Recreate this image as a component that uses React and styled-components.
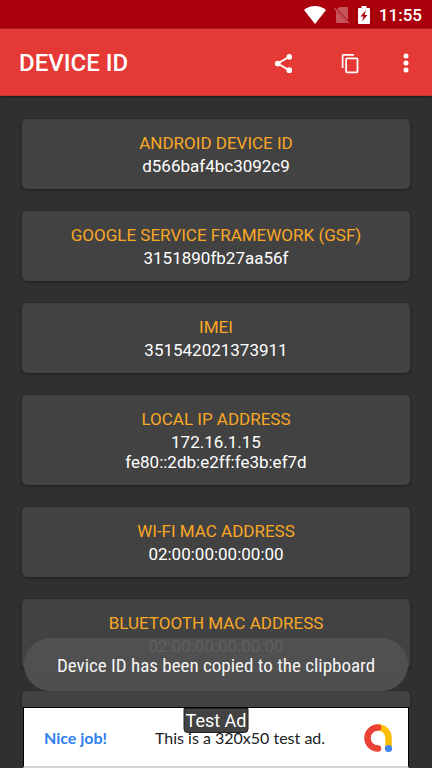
import React from "react";
import styled, { createGlobalStyle } from "styled-components";

const GlobalStyle = createGlobalStyle`
  *, *::before, *::after { box-sizing: border-box; }
  body {
    margin: 0;
    background: #303030;
    font-family: Roboto, "Liberation Sans", sans-serif;
  }
`;

const Screen = styled.div`
  position: relative;
  display: flex;
  flex-direction: column;
  height: 100vh;
  overflow: hidden;
  background: #303030;
  color: #fff;
`;

const StatusBar = styled.div`
  flex: none;
  display: flex;
  align-items: center;
  justify-content: flex-end;
  height: 29px;
  padding: 1px 10px 0 0;
  background: #a9000c;
  border-bottom: 1px solid #b71a1f;
  svg { display: block; }
`;

const StatusIcons = styled.div`
  display: flex;
  align-items: center;
  gap: 8px;
  margin-right: 9px;
`;

const Clock = styled.time`
  font-size: 17px;
  line-height: 28px;
  font-weight: 500;
`;

const AppBar = styled.header`
  position: relative;
  flex: none;
  display: flex;
  align-items: center;
  height: 67px;
  padding: 2px 4px 0 19px;
  background: #e53935;
  border-bottom: 1px solid #c5322f;
  box-shadow: 0 1px 2px #101c1c;
`;

const Title = styled.h1`
  flex: 1;
  margin: 0;
  font-size: 24px;
  line-height: 32px;
  font-weight: 500;
`;

const IconButton = styled.button`
  display: flex;
  align-items: center;
  justify-content: center;
  width: ${(p) => (p.$narrow ? "44px" : "67px")};
  height: 48px;
  padding: 0;
  border: 0;
  background: none;
  color: #fff;
  cursor: pointer;
  svg { display: block; }
`;

const List = styled.main`
  flex: 1;
  min-height: 0;
  overflow: hidden;
  display: flex;
  flex-direction: column;
  gap: 22px;
  padding: 23px 22px 0;
`;

const Card = styled.section`
  flex: none;
  padding: 14px 12px 13px;
  border-radius: 5px;
  background: #424242;
  box-shadow: 0 1px 3px rgba(0, 0, 0, 0.4);
  text-align: center;
`;

const CardTitle = styled.h2`
  margin: 0 0 3px;
  color: #f9a825;
  font-size: 17px;
  line-height: 20px;
  font-weight: 400;
`;

const CardValue = styled.p`
  margin: 0;
  font-size: 17px;
  line-height: 20px;
`;

const Toast = styled.div`
  position: absolute;
  left: 24px;
  right: 24px;
  bottom: 77px;
  padding: 16px 8px 13px;
  border-radius: 27px;
  background: rgba(82, 82, 82, 0.93);
  color: #f5f5f5;
  font-family: "Roboto Condensed", Roboto, sans-serif;
  font-size: 19px;
  line-height: 24px;
  text-align: center;
  white-space: nowrap;
`;

const Ad = styled.aside`
  position: relative;
  flex: none;
  display: flex;
  align-items: center;
  height: 61px;
  margin: 0 23px;
  padding: 2px 15px 0 20px;
  border: 1px solid #000;
  border-bottom: 2px solid #cfd4d8;
  background: #fff;
  font-family: Lato, "Open Sans", sans-serif;
  font-size: 16px;
  line-height: 24px;
`;

const AdLink = styled.a`
  width: 111px;
  color: #3080f0;
  font-weight: 700;
  text-decoration: none;
`;

const AdText = styled.span`
  flex: 1;
  color: #202124;
  white-space: nowrap;
`;

const AdBadge = styled.span`
  position: absolute;
  top: 0;
  left: 50%;
  transform: translateX(-50%);
  padding: 1px 1px 0;
  border: 1px solid #222;
  border-radius: 0 0 4px 4px;
  background: #424242;
  color: #fff;
  font-family: Roboto, sans-serif;
  font-size: 18px;
  line-height: 22px;
  white-space: nowrap;
`;

const WifiIcon = () => (
  <svg width="22" height="18" viewBox="0 0 22 18" fill="#fff" aria-hidden="true">
    <path d="M11 18 0 4C3 1.500 7 0 11 0s8 1.500 11 4Z" />
  </svg>
);

const NoSimIcon = () => (
  <svg width="16" height="18" viewBox="0 0 16 18" aria-hidden="true">
    <path d="M6 1h7q1 0 1 1v12L3 3ZM2 5l12 12H3q-1 0-1-1Z" fill="#c6555b" />
    <path d="m0 2 15 15" stroke="#c6555b" strokeWidth="1.300" />
  </svg>
);

const BatteryIcon = () => (
  <svg width="12" height="18" viewBox="0 0 12 18" aria-hidden="true">
    <path d="M3.500 0h5v2H11q1 0 1 1v14q0 1-1 1H1q-1 0-1-1V3q0-1 1-1h2.500Z" fill="#fff" />
    <path d="M8 4 2.500 10.500h3L4 15.500l5.500-6.500h-3Z" fill="#a9000c" />
  </svg>
);

const ShareIcon = () => (
  <svg width="23" height="23" viewBox="0 0 24 24" fill="#fff" aria-hidden="true">
    <path d="M18 5 6 12l12 7" fill="none" stroke="#fff" strokeWidth="2" />
    <circle cx="18" cy="5" r="3" />
    <circle cx="6" cy="12" r="3" />
    <circle cx="18" cy="19" r="3" />
  </svg>
);

const CopyIcon = () => (
  <svg width="21" height="21" viewBox="0 0 24 24" fill="#fff" aria-hidden="true">
    <path d="M16 1H4c-1.100 0-2 .9-2 2v14h2V3h12V1zm3 4H8c-1.100 0-2 .9-2 2v14c0 1.100.9 2 2 2h11c1.100 0 2-.9 2-2V7c0-1.100-.9-2-2-2zm0 16H8V7h11v14z" />
  </svg>
);

const MoreIcon = () => (
  <svg width="8" height="22" viewBox="0 0 8 22" fill="#fff" aria-hidden="true">
    <circle cx="4" cy="4" r="2.500" />
    <circle cx="4" cy="11" r="2.500" />
    <circle cx="4" cy="18" r="2.500" />
  </svg>
);

const AdMobLogo = () => (
  <svg width="30" height="30" viewBox="0 0 30 30" fill="none" strokeWidth="6.500" strokeLinecap="round" aria-hidden="true">
    <path d="M15 4.500c6 0 10.500 4.500 10.500 10.500v10" stroke="#fbbc04" />
    <path d="M15 4.500a10.500 10.500 0 0 0 0 21" stroke="#ea4335" />
    <circle cx="25.500" cy="25.500" r="3.600" fill="#4285f4" />
  </svg>
);

const entries = [
  { title: "ANDROID DEVICE ID", values: ["d566baf4bc3092c9"] },
  { title: "GOOGLE SERVICE FRAMEWORK (GSF)", values: ["3151890fb27aa56f"] },
  { title: "IMEI", values: ["351542021373911"] },
  { title: "LOCAL IP ADDRESS", values: ["172.16.1.15", "fe80::2db:e2ff:fe3b:ef7d"] },
  { title: "WI-FI MAC ADDRESS", values: ["02:00:00:00:00:00"] },
  { title: "BLUETOOTH MAC ADDRESS", values: ["02:00:00:00:00:00"] },
];

export default function App() {
  return (
    <>
      <GlobalStyle />
      <Screen>
        <StatusBar>
          <StatusIcons>
            <WifiIcon />
            <NoSimIcon />
            <BatteryIcon />
          </StatusIcons>
          <Clock>11:55</Clock>
        </StatusBar>
        <AppBar>
          <Title>DEVICE ID</Title>
          <IconButton type="button" aria-label="Share"><ShareIcon /></IconButton>
          <IconButton type="button" aria-label="Copy"><CopyIcon /></IconButton>
          <IconButton type="button" aria-label="More options" $narrow><MoreIcon /></IconButton>
        </AppBar>
        <List>
          {entries.map((entry) => (
            <Card key={entry.title}>
              <CardTitle>{entry.title}</CardTitle>
              {entry.values.map((value) => (
                <CardValue key={value}>{value}</CardValue>
              ))}
            </Card>
          ))}
          <Card />
        </List>
        <Ad>
          <AdLink href="#ad">Nice job!</AdLink>
          <AdText>This is a 320x50 test ad.</AdText>
          <AdMobLogo />
          <AdBadge>Test Ad</AdBadge>
        </Ad>
        <Toast role="status">Device ID has been copied to the clipboard</Toast>
      </Screen>
    </>
  );
}
